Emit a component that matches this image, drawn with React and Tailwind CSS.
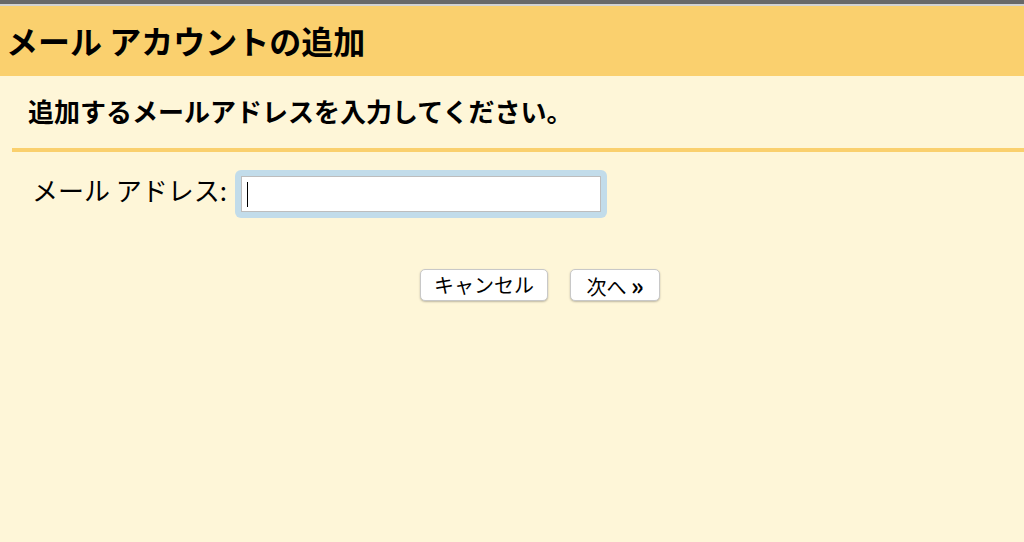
export default function App() {
  return (
    <div
      className="w-[1024px] h-[542px] overflow-hidden bg-[#fef6d8] text-black"
      style={{fontFamily: '"Noto Sans CJK JP", "Noto Sans", sans-serif'}}
    >
      <div className="h-[4px] bg-[#686868]" />
      <div className="h-[2px] bg-[#d2d2d2]" />
      <div className="h-[70px] bg-[#fad06e] flex items-center pl-[6px]">
        <h1 className="text-[32px] font-bold leading-none -mt-[3px]">メール アカウントの追加</h1>
      </div>
      <div className="pl-[12px]">
        <div className="h-[76px] flex items-center pl-[16px] border-b-4 border-[#fad06e]">
          <h2 className="text-[26px] font-bold leading-none -mt-[2px]">追加するメールアドレスを入力してください。</h2>
        </div>
      </div>
      <div className="flex items-center pl-[32px] pt-[18px]">
        <label className="text-[26px] leading-none mr-[8px] mb-[8px]">メール アドレス:</label>
        <div className="rounded-[6px] bg-[#c2dcea] p-[6px]">
          <div className="w-[360px] h-[36px] bg-white border border-[#bdbdbd] flex items-center pl-[5px]">
            <span className="w-[1px] h-[25px] bg-black" />
          </div>
        </div>
      </div>
      <div className="flex justify-center gap-[22px] pt-[51px] pl-[56px]">
        <button className="h-[32px] w-[128px] bg-white rounded-[5px] border border-[#c8c8c8] shadow-[0_1px_2px_rgba(0,0,0,0.25)] text-[20px] leading-none">
          キャンセル
        </button>
        <button className="h-[32px] w-[90px] bg-white rounded-[5px] border border-[#c8c8c8] shadow-[0_1px_2px_rgba(0,0,0,0.25)] text-[20px] leading-none">
          次へ <span className="font-bold text-[24px]">»</span>
        </button>
      </div>
    </div>
  );
}
